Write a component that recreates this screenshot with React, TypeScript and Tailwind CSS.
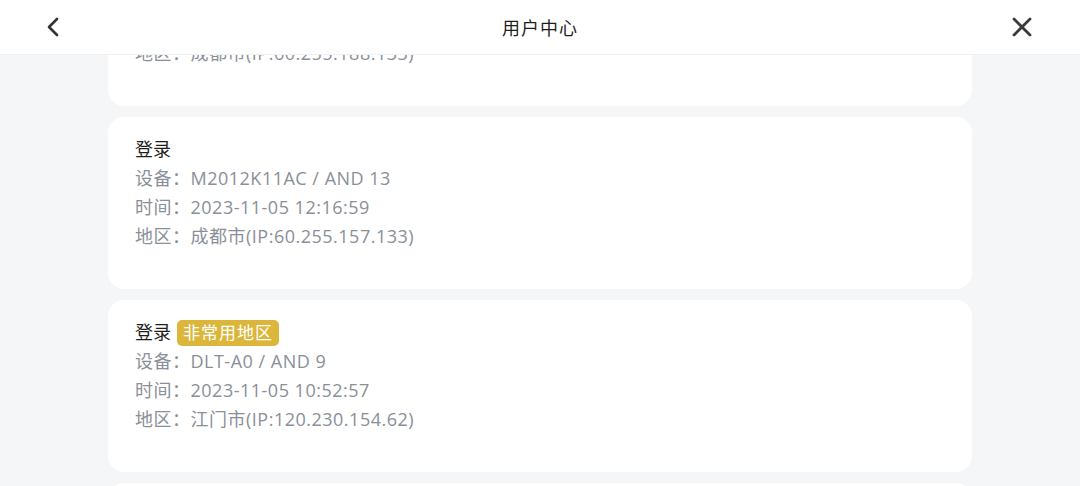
import React from "react";

type Rec = { badge?: string; device: string; time: string; region: string };

const recs: Rec[] = [
  { device: "M2012K11AC / AND 13", time: "2023-11-05 13:01:20", region: "成都市(IP:60.255.188.133)" },
  { device: "M2012K11AC / AND 13", time: "2023-11-05 12:16:59", region: "成都市(IP:60.255.157.133)" },
  { badge: "非常用地区", device: "DLT-A0 / AND 9", time: "2023-11-05 10:52:57", region: "江门市(IP:120.230.154.62)" },
  { device: "M2012K11AC / AND 13", time: "2023-11-05 09:10:11", region: "成都市(IP:60.255.157.133)" },
];

function Card({ r }: { r: Rec }) {
  return (
    <div className="bg-white rounded-[16px] pl-[27px] pr-6 pt-[18px] pb-[38px] text-[18px] leading-[29px]">
      <div className="flex items-center text-[#1f1f1f] h-[29px]">
        <span>登录</span>
        {r.badge && (
          <span className="ml-[6px] bg-[#dbb63a] text-white text-[17px] leading-[25px] h-[26px] px-[6px] rounded-[5px] tracking-[1px]">
            {r.badge}
          </span>
        )}
      </div>
      <div className="text-[#8a8f99] tracking-[0.5px]">设备：{r.device}</div>
      <div className="text-[#8a8f99] tracking-[0.5px]">时间：{r.time}</div>
      <div className="text-[#8a8f99] tracking-[0.5px]">地区：{r.region}</div>
    </div>
  );
}

export default function App() {
  return (
    <div
      className="relative w-[1080px] h-[486px] overflow-hidden bg-[#f5f6f8]"
      style={{ fontFamily: '"Open Sans", "Noto Sans CJK SC", sans-serif' }}
    >
      <div className="flex flex-col gap-[11px] px-[108px] mt-[-66px]">
        {recs.map((r, i) => (
          <Card key={i} r={r} />
        ))}
      </div>
      <div
        className="absolute top-0 left-0 right-0 h-[55px] bg-white border-b border-[#eef0f2] flex items-center justify-between"
        style={{ fontFamily: '"Noto Sans CJK SC", sans-serif' }}
      >
        <div className="w-[104px] flex justify-center">
          <svg width="20" height="24" viewBox="0 0 20 24" className="ml-[4px]">
            <path d="M13 4 L5 12 L13 20" fill="none" stroke="#333" strokeWidth="2.6" strokeLinecap="round" strokeLinejoin="round" />
          </svg>
        </div>
        <div className="text-[18px] text-[#1f1f1f] tracking-[1px]">用户中心</div>
        <div className="w-[104px] flex justify-center">
          <svg width="24" height="24" viewBox="0 0 24 24" className="ml-[-12px]">
            <path d="M4 4 L20 20 M20 4 L4 20" fill="none" stroke="#3a3a3a" strokeWidth="2.8" strokeLinecap="round" />
          </svg>
        </div>
      </div>
    </div>
  );
}
